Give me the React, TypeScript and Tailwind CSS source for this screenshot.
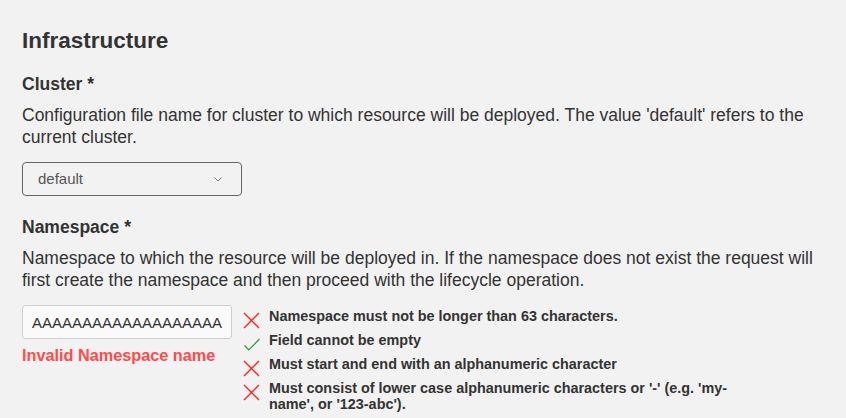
const rules = [
  { ok: false, text: "Namespace must not be longer than 63 characters." },
  { ok: true, text: "Field cannot be empty" },
  { ok: false, text: "Must start and end with an alphanumeric character" },
  {
    ok: false,
    text: "Must consist of lower case alphanumeric characters or '-' (e.g. 'my-name', or '123-abc').",
  },
];

const CrossIcon = () => (
  <svg width="17" height="17" viewBox="0 0 17 17" className="shrink-0">
    <path d="M1 1 L16 16 M16 1 L1 16" stroke="#ff1f1f" strokeWidth="1.3" fill="none" />
  </svg>
);

const CheckIcon = () => (
  <svg width="17" height="17" viewBox="0 0 17 17" className="shrink-0">
    <path d="M1.5 9.5 L5.8 14 L16.5 3" stroke="#2f9a2f" strokeWidth="1.2" fill="none" />
  </svg>
);

export default function App() {
  return (
    <div
      className="min-h-[418px] w-full bg-[#f2f2f2] pl-[22px] pr-2 pt-[28px] text-[#333]"
      style={{ fontFamily: '"Liberation Sans", Arial, sans-serif' }}
    >
      <h1 className="text-[22.5px] font-bold leading-[26px]">Infrastructure</h1>

      {/* Cluster */}
      <h2 className="mt-[19px] text-[17.5px] font-bold leading-[22px]">Cluster *</h2>
      <p className="mt-[9px] text-[17.5px] leading-[22px]">
        Configuration file name for cluster to which resource will be deployed. The value 'default'
        refers to the current cluster.
      </p>
      <div className="mt-[14px] flex h-[34px] w-[220px] items-center justify-between rounded-[4px] border border-[#666] pl-[15px] pr-[19px]">
        <span className="text-[15px] text-[#555]">default</span>
        <svg width="8" height="5" viewBox="0 0 8 5">
          <path d="M0.5 0.5 L4 4 L7.5 0.5" stroke="#777" strokeWidth="1" fill="none" />
        </svg>
      </div>

      {/* Namespace */}
      <h2 className="mt-[20px] text-[17.5px] font-bold leading-[22px]">Namespace *</h2>
      <p className="mt-[9px] text-[17.5px] leading-[22px]">
        Namespace to which the resource will be deployed in. If the namespace does not exist the
        request will first create the namespace and then proceed with the lifecycle operation.
      </p>

      <div className="mt-[14px] flex gap-[11px]">
        <div className="w-[210px] shrink-0">
          <input
            readOnly
            value="AAAAAAAAAAAAAAAAAAAAAAAAAAAAAAAAAAAAAAAAAAAAAAAAAAAAAAAAAAAAAAAAAAAAA"
            className="h-[34px] w-full rounded-[3px] border border-[#cfcfcf] bg-[#fafafa] px-[9px] text-[15px] text-[#333] outline-none"
          />
          <div className="mt-[6px] text-[16.25px] font-bold leading-[20px] text-[#ff4b4b]">
            Invalid Namespace name
          </div>
        </div>

        <ul className="mt-[3px] flex w-[500px] flex-col gap-[3px]">
          {rules.map((r) => (
            <li key={r.text} className="flex gap-[9px]">
              <span className="mt-1">{r.ok ? <CheckIcon /> : <CrossIcon />}</span>
              <span className="text-[14.4px] font-bold leading-4 text-[#333]">{r.text}</span>
            </li>
          ))}
        </ul>
      </div>
    </div>
  );
}
